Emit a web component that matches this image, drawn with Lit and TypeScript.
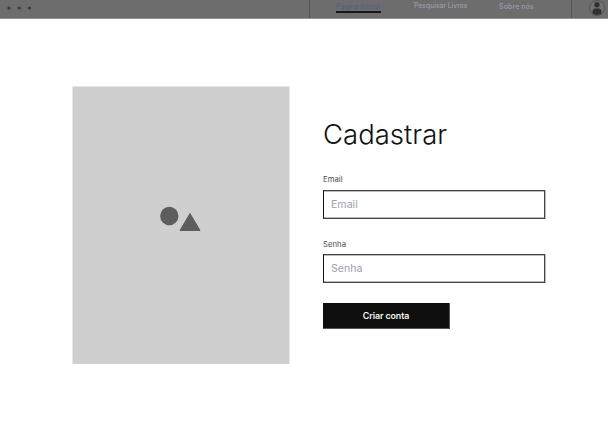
import { LitElement, html, css } from "lit";
import { customElement } from "lit/decorators.js";

@customElement("app-root")
export class AppRoot extends LitElement {
  static styles = css`
    :host { display: block; width: 608px; height: 428px; overflow: hidden; background: #fff; font-family: Inter, "Liberation Sans", sans-serif; color: #111; }
    * { box-sizing: border-box; }
    .top { height: 19px; display: flex; background: #6d6d6d; border-bottom: 1px solid #929292; overflow: hidden; }
    .dots { width: 309px; flex: none; }
    svg { display: block; }
    .nav { width: 263px; height: 18px; flex: none; display: flex; border: solid #555; border-width: 0 1px; padding-left: 26px; font-size: 7px; font-weight: 500; line-height: 9px; color: #959baa; white-space: nowrap; }
    .link { height: 13px; padding-top: 1px; }
    .active { width: 45px; color: #526086; padding-top: 2px; border-bottom: 2px solid #171717; margin-right: 33px; letter-spacing: -.02px; }
    .books { width: 85px; letter-spacing: -.12px; }
    .about { padding-top: 2px; letter-spacing: .12px; }
    .user { margin-left: 17px; }
    .main { display: flex; padding: 67px 0 0 72px; }
    .picture { width: 218px; height: 278px; background: #cfcfcf; border: solid #e7e7e7; border-width: 1px 1px 0; flex: none; }
    .form { width: 223px; margin-left: 33px; padding-top: 30px; }
    h1 { margin: 0; height: 36px; font-size: 27.5px; line-height: 36px; font-weight: 350; letter-spacing: .02px; white-space: nowrap; }
    label { display: block; height: 10px; margin-top: 23px; font-size: 7.7px; line-height: 10px; letter-spacing: .04px; color: #4a4a4a; }
    .field { width: 222px; height: 29px; display: block; margin: 5px 0 0; padding: 0 0 0 7px; border: 1px solid #444; border-left-color: #111; border-radius: 0; outline: 0; background: #fff; box-shadow: inset 0 1px #bbb, inset 0 -1px #bbb, 1px 0 #bbb; font: 10.6px/26px Inter, sans-serif; color: #111; }
    .field::placeholder { color: #9ca2af; opacity: 1; }
    .second { margin-top: 21px; }
    .second + .field { margin-top: 4px; }
    button { display: block; width: 127px; height: 26px; margin-top: 20px; padding: 0; border: solid #555; border-width: 0 1px 1px 0; border-radius: 0; background: #0f0f0f; color: #f5f5f5; font: 600 8.9px/25px Inter, sans-serif; letter-spacing: -.1px; }
  `;

  render() {
    return html`
      <header class="top">
        <div class="dots">
          <svg width="40" height="18" fill="#393939"><circle cx="9" cy="8" r="1.6"/><circle cx="19.2" cy="8" r="1.6"/><circle cx="29.5" cy="8" r="1.6"/></svg>
        </div>
        <nav class="nav">
          <span class="link active">Página Inicial</span>
          <span class="link books">Pesquisar Livros</span>
          <span class="link about">Sobre nós</span>
        </nav>
        <svg class="user" width="19" height="18"><circle cx="8" cy="8" r="7.5" fill="#727272" stroke="#505050" stroke-width=".9"/><circle cx="8" cy="4.8" r="2.7" fill="#303030"/><path d="M3.5 13.5v-1.6Q3.6 8.8 6.2 8.5h3.6q2.6.3 2.7 3.4v1.6Q8 16.4 3.5 13.5Z" fill="#303030"/></svg>
      </header>
      <main class="main">
        <div class="picture">
          <svg width="216" height="277" fill="#5d5d5d"><circle cx="96.3" cy="129" r="9.2"/><path d="M117 126.5 127 143.5H107Z" stroke="#5d5d5d" stroke-width="1" stroke-linejoin="round"/></svg>
        </div>
        <div class="form">
          <h1>Cadastrar</h1>
          <label for="email">Email</label>
          <input class="field" id="email" placeholder="Email">
          <label class="second" for="password">Senha</label>
          <input class="field" id="password" placeholder="Senha">
          <button>Criar conta</button>
        </div>
      </main>
    `;
  }
}
